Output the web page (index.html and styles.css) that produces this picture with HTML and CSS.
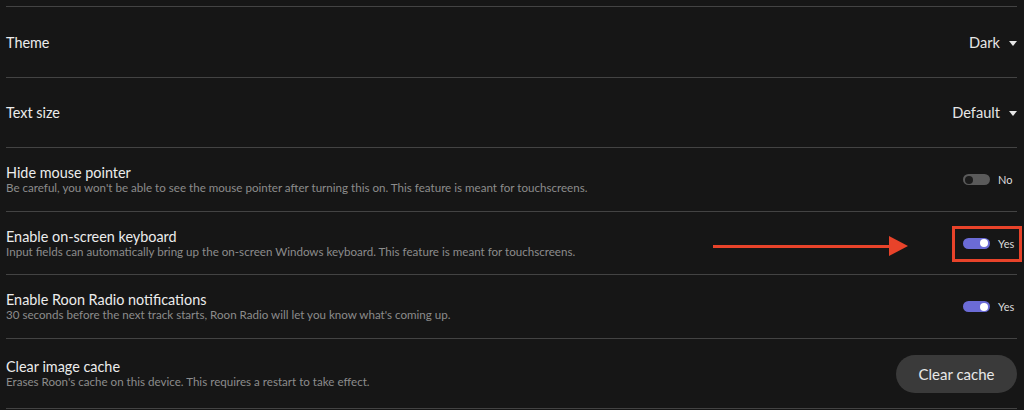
FILE: index.html
```html
<!DOCTYPE html>
<html>
<head>
<meta charset="utf-8">
<link rel="stylesheet" href="styles.css">
</head>
<body>
<div class="settings">
  <div class="row row-first">
    <div class="info"><div class="title">Theme</div></div>
    <div class="control select"><span>Dark</span><span class="caret"></span></div>
  </div>
  <div class="row row-tall">
    <div class="info"><div class="title">Text size</div></div>
    <div class="control select"><span>Default</span><span class="caret"></span></div>
  </div>
  <div class="row">
    <div class="info">
      <div class="title">Hide mouse pointer</div>
      <div class="desc">Be careful, you won't be able to see the mouse pointer after turning this on. This feature is meant for touchscreens.</div>
    </div>
    <div class="control toggle-wrap"><span class="toggle off"><span class="knob"></span></span><span class="tlabel">No</span></div>
  </div>
  <div class="row row-short annotated">
    <div class="info">
      <div class="title">Enable on-screen keyboard</div>
      <div class="desc">Input fields can automatically bring up the on-screen Windows keyboard. This feature is meant for touchscreens.</div>
    </div>
    <div class="control toggle-wrap"><span class="toggle on"><span class="knob"></span></span><span class="tlabel">Yes</span></div>
    <div class="arrow"><span class="shaft"></span><span class="head"></span></div>
    <div class="highlight"></div>
  </div>
  <div class="row">
    <div class="info">
      <div class="title">Enable Roon Radio notifications</div>
      <div class="desc">30 seconds before the next track starts, Roon Radio will let you know what's coming up.</div>
    </div>
    <div class="control toggle-wrap"><span class="toggle on"><span class="knob"></span></span><span class="tlabel">Yes</span></div>
  </div>
  <div class="row row-tall last">
    <div class="info">
      <div class="title">Clear image cache</div>
      <div class="desc">Erases Roon's cache on this device. This requires a restart to take effect.</div>
    </div>
    <div class="control"><button class="btn">Clear cache</button></div>
  </div>
</div>
</body>
</html>
```

FILE: styles.css
```css
html, body {
  margin: 0;
  padding: 0;
  background: #161616;
  height: 410px;
  overflow: hidden;
}
body {
  font-family: Lato, "Open Sans", sans-serif;
  color: #e6e6e6;
}
.settings {
  padding: 6px 7px 0 6px;
}
.row {
  position: relative;
  display: flex;
  align-items: center;
  justify-content: space-between;
  height: 63px;
  border-top: 1px solid #434343;
}
.row-first {
  height: 70px;
}
.row-tall {
  height: 69px;
}
.row-short {
  height: 62px;
}
.last {
  border-bottom: 1px solid #434343;
}
.info {
  display: flex;
  flex-direction: column;
}
.title {
  font-size: 14.4px;
  line-height: 17px;
  color: #ececec;
}
.desc {
  font-size: 11.6px;
  line-height: 14px;
  color: #8c8c8c;
}
.control {
  display: flex;
  align-items: center;
}
.select {
  font-size: 14.6px;
  color: #e6e6e6;
  gap: 9px;
}
.caret {
  width: 0;
  height: 0;
  border-left: 4px solid transparent;
  border-right: 4px solid transparent;
  border-top: 5px solid #e6e6e6;
  margin-top: 2px;
}
.toggle-wrap {
  gap: 8px;
  margin-right: 2px;
}
.toggle {
  position: relative;
  display: flex;
  align-items: center;
  width: 27px;
  height: 11px;
  border-radius: 6px;
  box-sizing: border-box;
  padding: 0 2px;
}
.toggle.off {
  background: #5a5a5a;
  justify-content: flex-start;
}
.toggle.on {
  background: #6b6bd6;
  justify-content: flex-end;
}
.knob {
  width: 8px;
  height: 8px;
  border-radius: 50%;
}
.off .knob { background: #1c1c1c; }
.on .knob { background: #ffffff; }
.tlabel {
  font-size: 11px;
  color: #dcdcdc;
  width: 17px;
}
.btn {
  font-family: Lato, sans-serif;
  font-size: 15px;
  color: #e8e8e8;
  background: #3a3a3a;
  border: none;
  border-radius: 19px;
  width: 121px;
  height: 38px;
  padding: 0;
}
.arrow {
  position: absolute;
  left: 707px;
  top: 24px;
  display: flex;
  align-items: center;
}
.shaft {
  width: 176px;
  height: 3px;
  background: #e8432a;
}
.head {
  width: 0;
  height: 0;
  border-top: 10px solid transparent;
  border-bottom: 10px solid transparent;
  border-left: 19px solid #e8432a;
}
.highlight {
  position: absolute;
  left: 946px;
  top: 14px;
  width: 64px;
  height: 30px;
  border: 3px solid #e8432a;
}
```
